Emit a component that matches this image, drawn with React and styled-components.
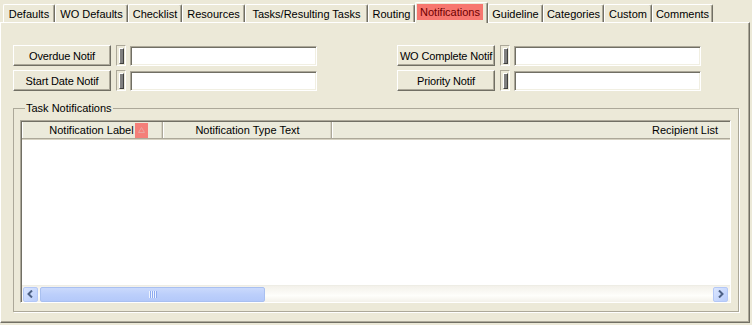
import React from 'react';
import styled, { createGlobalStyle } from 'styled-components';

const GlobalStyle = createGlobalStyle`
  html, body {
    margin: 0;
    padding: 0;
    background: #ece9d8;
  }
  * {
    box-sizing: border-box;
  }
`;

const Window = styled.div`
  width: 752px;
  height: 325px;
  background: #ece9d8;
  font-family: 'Liberation Sans', Arial, sans-serif;
  font-size: 11px;
  color: #000;
  overflow: hidden;
`;

const TabStrip = styled.div`
  display: flex;
  align-items: flex-end;
  height: 22px;
  padding-left: 3px;
`;

const Tab = styled.div`
  width: ${props => props.w}px;
  height: ${props => (props.active ? 21 : 18)}px;
  margin-bottom: ${props => (props.active ? -1 : 0)}px;
  position: relative;
  z-index: ${props => (props.active ? 2 : 1)};
  display: flex;
  align-items: ${props => (props.active ? 'flex-start' : 'center')};
  justify-content: center;
  padding-top: 1px;
  background: #ece9d8;
  border-top: 1px solid #fff;
  border-left: 1px solid #fff;
  border-right: 1px solid #716f64;
  box-shadow: inset -1px 0 0 #aca899;
  border-radius: 2px 2px 0 0;
  white-space: nowrap;
`;

const ActiveLabel = styled.span`
  display: block;
  width: 66px;
  height: 16px;
  line-height: 16px;
  text-align: center;
  background: #f7766f;
  color: #6e0000;
  margin-right: 3px;
`;

const Panel = styled.div`
  width: 750px;
  height: 301px;
  border-top: 1px solid #fff;
  border-left: 1px solid #fff;
  border-right: 1px solid #716f64;
  border-bottom: 1px solid #716f64;
  box-shadow: inset -1px -1px 0 #aca899;
  padding: 22px 0 0 12px;
  display: flex;
  flex-direction: column;
`;

const FieldsRow = styled.div`
  display: flex;
  gap: 80px;
`;

const FieldColumn = styled.div`
  display: flex;
  flex-direction: column;
  gap: 4px;
`;

const FieldRow = styled.div`
  display: flex;
  align-items: center;
  height: 21px;
`;

const NotifButton = styled.button`
  width: 98px;
  height: 21px;
  margin: 0 5px 0 0;
  padding: 0;
  font: inherit;
  letter-spacing: -0.15px;
  color: #000;
  background: #ece9d8;
  border-top: 1px solid #fff;
  border-left: 1px solid #fff;
  border-right: 1px solid #716f64;
  border-bottom: 1px solid #716f64;
  box-shadow: inset -1px -1px 0 #aca899;
  white-space: nowrap;
`;

const Gripper = styled.div`
  width: 10px;
  height: 21px;
  margin-right: 4px;
  padding: 2px 1px 1px 2px;
  border-top: 1px solid #aca899;
  border-left: 1px solid #aca899;
  border-right: 1px solid #fff;
  border-bottom: 1px solid #fff;
  display: flex;
`;

const GripBar = styled.div`
  flex: 1;
  background: #7f7f7f;
  border-left: 1px solid #fff;
  border-top: 1px solid #fff;
  border-right: 1px solid #404040;
  border-bottom: 1px solid #404040;
`;

const TextInput = styled.div`
  width: 187px;
  height: 20px;
  background: #fff;
  border-top: 1px solid #aca899;
  border-left: 1px solid #aca899;
  border-right: 1px solid #fff;
  border-bottom: 1px solid #fff;
  box-shadow: inset 1px 1px 0 #716f64, inset -1px -1px 0 #f1efe2;
`;

const GroupBox = styled.fieldset`
  width: 726px;
  height: 210px;
  margin: 11px 0 0 0;
  padding: 5px 5px 6px 6px;
  border: 1px solid #aca899;
  box-shadow: 1px 1px 0 #fff;
`;

const Legend = styled.legend`
  padding: 0 1px;
  margin-left: 5px;
  line-height: 13px;
`;

const ListView = styled.div`
  width: 711px;
  height: 183px;
  background: #fff;
  border-top: 1px solid #aca899;
  border-left: 1px solid #aca899;
  border-right: 1px solid #fff;
  border-bottom: 1px solid #fff;
  box-shadow: inset 1px 1px 0 #716f64;
  padding: 1px 0 0 1px;
  display: flex;
  flex-direction: column;
`;

const HeaderRow = styled.div`
  display: grid;
  grid-template-columns: 141px 169px 1fr;
  height: 17px;
  background: #ebeadb;
  border-bottom: 1px solid #aca899;
  box-shadow: 0 1px 0 #d6d2c2;
`;

const HeaderCell = styled.div`
  display: flex;
  align-items: center;
  justify-content: ${props => (props.right ? 'flex-end' : 'center')};
  padding-right: ${props => (props.right ? 12 : 0)}px;
  border-left: 1px solid #fff;
  border-right: ${props => (props.right ? 'none' : '1px solid #aca899')};
  box-shadow: ${props => (props.right ? 'none' : 'inset -1px 0 0 #d6d2c2')};
  white-space: nowrap;
`;

const SortMark = styled.span`
  width: 13px;
  height: 15px;
  margin-left: 1px;
  margin-right: -12px;
  background: #f47f79;
  display: flex;
  align-items: center;
  justify-content: center;
`;

const ListBody = styled.div`
  flex: 1;
`;

const ScrollBar = styled.div`
  height: 17px;
  display: flex;
  align-items: center;
  padding: 0 2px 0 1px;
  background: linear-gradient(#f3f1ea, #fefefb 60%, #f3f1ea);
  border-top: 1px solid #eeede5;
`;

const ArrowButton = styled.div`
  width: 15px;
  height: 15px;
  border: 1px solid #b4c8f6;
  border-radius: 2px;
  background: linear-gradient(135deg, #dbe6fe, #b9cdfb);
  display: flex;
  align-items: center;
  justify-content: center;
`;

const Thumb = styled.div`
  width: 225px;
  height: 15px;
  margin-left: 2px;
  border: 1px solid #a9c0f0;
  border-radius: 2px;
  background: linear-gradient(#cad9fc, #bccffb 50%, #b4c9fa);
  display: flex;
  align-items: center;
  justify-content: center;
`;

const Track = styled.div`
  flex: 1;
`;

const tabs = [
  { label: 'Defaults', w: 52 },
  { label: 'WO Defaults', w: 73 },
  { label: 'Checklist', w: 54 },
  { label: 'Resources', w: 63 },
  { label: 'Tasks/Resulting Tasks', w: 123 },
  { label: 'Routing', w: 47 },
  { label: 'Notifications', w: 73, active: true },
  { label: 'Guideline', w: 55 },
  { label: 'Categories', w: 61 },
  { label: 'Custom', w: 48 },
  { label: 'Comments', w: 61 },
];

const Field = ({ label }) => (
  <FieldRow>
    <NotifButton>{label}</NotifButton>
    <Gripper>
      <GripBar />
    </Gripper>
    <TextInput />
  </FieldRow>
);

const Chevron = ({ dir }) => (
  <svg width="7" height="8" viewBox="0 0 7 8">
    <path
      d={dir === 'left' ? 'M5 0.5 L1.5 4 L5 7.5' : 'M2 0.5 L5.5 4 L2 7.5'}
      fill="none"
      stroke="#4d6185"
      strokeWidth="2"
    />
  </svg>
);

const Grip = () => (
  <svg width="8" height="7" viewBox="0 0 8 7">
    {[0, 2, 4, 6].map(x => (
      <rect key={x} x={x} y="0" width="1" height="7" fill="#eef3fe" />
    ))}
    {[1, 3, 5, 7].map(x => (
      <rect key={x} x={x} y="0" width="1" height="7" fill="#8caaf0" />
    ))}
  </svg>
);

const App = () => {
  return (
    <Window>
      <GlobalStyle />
      <TabStrip>
        {tabs.map(t => (
          <Tab key={t.label} w={t.w} active={t.active}>
            {t.active ? <ActiveLabel>{t.label}</ActiveLabel> : t.label}
          </Tab>
        ))}
      </TabStrip>
      <Panel>
        <FieldsRow>
          <FieldColumn>
            <Field label="Overdue Notif" />
            <Field label="Start Date Notif" />
          </FieldColumn>
          <FieldColumn>
            <Field label="WO Complete Notif" />
            <Field label="Priority Notif" />
          </FieldColumn>
        </FieldsRow>
        <GroupBox>
          <Legend>Task Notifications</Legend>
          <ListView>
            <HeaderRow>
              <HeaderCell>
                Notification Label
                <SortMark>
                  <svg width="7" height="6" viewBox="0 0 7 6">
                    <path d="M0.5 5.5 L3.5 0.5 L6.5 5.5 Z" fill="none" stroke="#e8a5a0" strokeWidth="1" />
                  </svg>
                </SortMark>
              </HeaderCell>
              <HeaderCell>Notification Type Text</HeaderCell>
              <HeaderCell right>Recipient List</HeaderCell>
            </HeaderRow>
            <ListBody />
            <ScrollBar>
              <ArrowButton>
                <Chevron dir="left" />
              </ArrowButton>
              <Thumb>
                <Grip />
              </Thumb>
              <Track />
              <ArrowButton>
                <Chevron dir="right" />
              </ArrowButton>
            </ScrollBar>
          </ListView>
        </GroupBox>
      </Panel>
    </Window>
  );
};

export default App;
